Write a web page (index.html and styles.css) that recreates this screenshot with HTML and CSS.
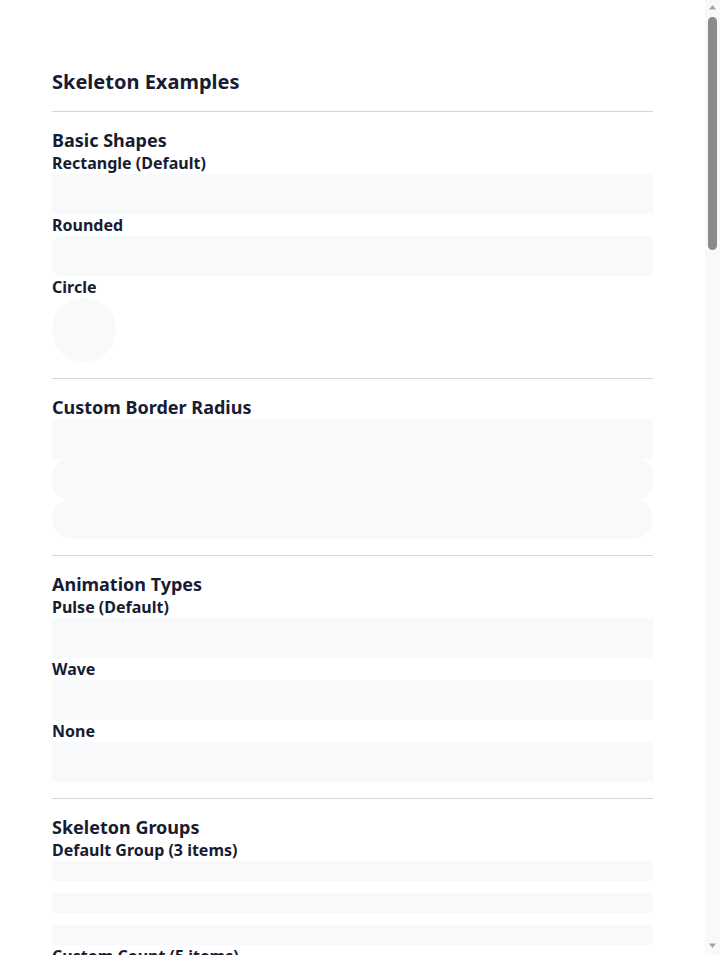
FILE: index.html
```html
<!DOCTYPE html>
<html lang="en">
<head>
<meta charset="utf-8">
<title>Skeleton Examples</title>
<link rel="stylesheet" href="styles.css">
</head>
<body>
<div class="app">
<div class="scroller">
<main class="page">
  <header class="page-header">
    <h1 class="title">Skeleton Examples</h1>
  </header>

  <section class="section">
    <h2 class="section-title">Basic Shapes</h2>
    <div class="label">Rectangle (Default)</div>
    <div class="sk sk-rect"></div>
    <div class="label">Rounded</div>
    <div class="sk sk-rounded"></div>
    <div class="label">Circle</div>
    <div class="sk sk-circle"></div>
  </section>

  <section class="section">
    <h2 class="section-title">Custom Border Radius</h2>
    <div class="sk sk-r4"></div>
    <div class="sk sk-r16"></div>
    <div class="sk sk-r20"></div>
  </section>

  <section class="section">
    <h2 class="section-title">Animation Types</h2>
    <div class="label">Pulse (Default)</div>
    <div class="sk sk-rect"></div>
    <div class="label">Wave</div>
    <div class="sk sk-rect"></div>
    <div class="label">None</div>
    <div class="sk sk-rect"></div>
  </section>

  <section class="section">
    <h2 class="section-title">Skeleton Groups</h2>
    <div class="label">Default Group (3 items)</div>
    <div class="group">
      <div class="sk sk-line"></div>
      <div class="sk sk-line"></div>
      <div class="sk sk-line"></div>
    </div>
    <div class="label">Custom Count (5 items)</div>
    <div class="group">
      <div class="sk sk-line"></div>
      <div class="sk sk-line"></div>
      <div class="sk sk-line"></div>
      <div class="sk sk-line"></div>
      <div class="sk sk-line"></div>
    </div>
    <div class="label">Custom Spacing</div>
    <div class="group group-wide">
      <div class="sk sk-line"></div>
      <div class="sk sk-line"></div>
      <div class="sk sk-line"></div>
    </div>
  </section>

  <section class="section">
    <h2 class="section-title">Text Skeleton</h2>
    <div class="label">Paragraph</div>
    <div class="group group-tight">
      <div class="sk sk-text"></div>
      <div class="sk sk-text"></div>
      <div class="sk sk-text"></div>
      <div class="sk sk-text sk-short"></div>
    </div>
    <div class="label">Heading</div>
    <div class="sk sk-heading"></div>
  </section>

  <section class="section">
    <h2 class="section-title">Card Example</h2>
    <div class="card">
      <div class="sk sk-media"></div>
      <div class="card-body">
        <div class="sk sk-heading"></div>
        <div class="group group-tight">
          <div class="sk sk-text"></div>
          <div class="sk sk-text"></div>
          <div class="sk sk-text sk-short"></div>
        </div>
      </div>
    </div>
  </section>

  <section class="section">
    <h2 class="section-title">List Example</h2>
    <div class="list">
      <div class="list-item"><div class="sk sk-avatar"></div><div class="list-lines"><div class="sk sk-text"></div><div class="sk sk-text sk-short"></div></div></div>
      <div class="list-item"><div class="sk sk-avatar"></div><div class="list-lines"><div class="sk sk-text"></div><div class="sk sk-text sk-short"></div></div></div>
      <div class="list-item"><div class="sk sk-avatar"></div><div class="list-lines"><div class="sk sk-text"></div><div class="sk sk-text sk-short"></div></div></div>
    </div>
  </section>

  <section class="section">
    <h2 class="section-title">Profile Example</h2>
    <div class="profile">
      <div class="sk sk-circle-lg"></div>
      <div class="sk sk-heading sk-half"></div>
      <div class="sk sk-text sk-short"></div>
    </div>
  </section>
</main>
</div>
<div class="scrollbar" aria-hidden="true">
  <div class="sb-button">
    <svg width="15" height="15" viewBox="0 0 15 15"><polygon points="4,9.5 7.5,5 11,9.5" fill="#a3a3a3"/></svg>
  </div>
  <div class="sb-track">
    <div class="sb-thumb"></div>
  </div>
  <div class="sb-button">
    <svg width="15" height="15" viewBox="0 0 15 15"><polygon points="4,3.5 7.5,8 11,3.5" fill="#a3a3a3"/></svg>
  </div>
</div>
</div>
</body>
</html>
```
FILE: styles.css
```css
html, body {
  margin: 0;
  padding: 0;
  background: #ffffff;
  height: 100%;
  overflow: hidden;
}

body {
  font-family: "Noto Sans", "Open Sans", "DejaVu Sans", sans-serif;
  color: #171c33;
}

.app {
  display: flex;
  height: 100vh;
}

.scroller {
  flex: 1;
  min-width: 0;
  overflow: hidden;
}

.scrollbar {
  width: 15px;
  flex: none;
  display: flex;
  flex-direction: column;
  background: #f9f9f9;
}

.sb-button {
  height: 15px;
  flex: none;
}

.sb-button svg {
  display: block;
}

.sb-track {
  flex: 1;
  padding: 2px 3px 0;
}

.sb-thumb {
  height: 233px;
  border-radius: 5px;
  background: #8b8b8b;
}

.page {
  padding: 68px 52px 80px;
}

.page-header {
  padding-bottom: 15px;
  border-bottom: 1px solid #d4d5da;
}

.title {
  margin: 0;
  font-size: 20px;
  line-height: 28px;
  font-weight: 700;
}

.section {
  padding: 16px 0;
  border-bottom: 1px solid #d4d5da;
}

.section-title {
  margin: 0;
  font-size: 18px;
  line-height: 24px;
  font-weight: 700;
}

.label {
  font-size: 16px;
  line-height: 22px;
  font-weight: 700;
}

.sk {
  background: #f8f9fb;
}

.sk-rect {
  height: 40px;
}

.sk-rounded {
  height: 40px;
  border-radius: 8px;
}

.sk-circle {
  width: 64px;
  height: 64px;
  border-radius: 50%;
}

.sk-r4 {
  height: 40px;
  border-radius: 4px;
}

.sk-r16 {
  height: 40px;
  border-radius: 16px;
}

.sk-r20 {
  height: 40px;
  border-radius: 20px;
}

.group {
  display: flex;
  flex-direction: column;
  gap: 12px;
}

.group-wide {
  gap: 24px;
}

.group-tight {
  gap: 8px;
}

.sk-line {
  height: 20px;
}

.sk-text {
  height: 16px;
  border-radius: 4px;
}

.sk-short {
  width: 60%;
}

.sk-half {
  width: 50%;
}

.sk-heading {
  height: 28px;
  border-radius: 4px;
  margin-bottom: 12px;
}

.card {
  margin-top: 12px;
  border: 1px solid #eceef2;
  border-radius: 8px;
  overflow: hidden;
}

.sk-media {
  height: 200px;
}

.card-body {
  padding: 16px;
}

.list {
  margin-top: 12px;
  display: flex;
  flex-direction: column;
  gap: 16px;
}

.list-item {
  display: flex;
  align-items: center;
  gap: 16px;
}

.sk-avatar {
  width: 48px;
  height: 48px;
  border-radius: 50%;
  flex: none;
}

.list-lines {
  flex: 1;
  display: flex;
  flex-direction: column;
  gap: 8px;
}

.profile {
  margin-top: 12px;
  display: flex;
  flex-direction: column;
  align-items: center;
  gap: 12px;
}

.sk-circle-lg {
  width: 96px;
  height: 96px;
  border-radius: 50%;
}

.profile .sk-heading {
  margin-bottom: 0;
}
```
